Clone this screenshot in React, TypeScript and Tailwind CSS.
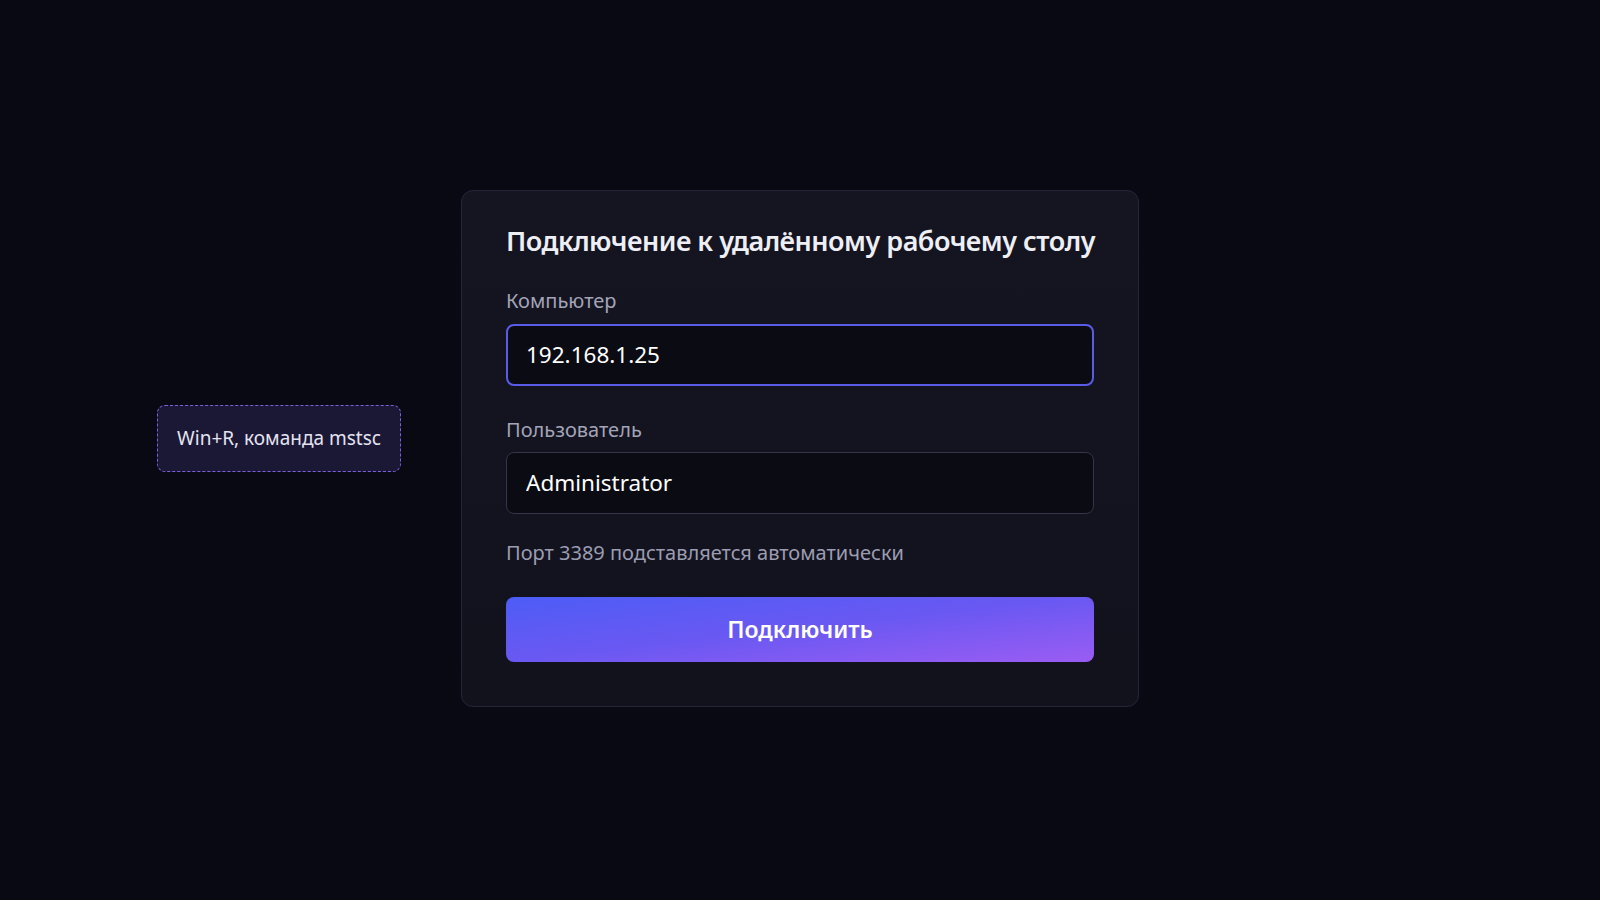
import React, { useState } from 'react';

const FONT = '"Noto Sans", "Open Sans", sans-serif';

export default function App() {
  const [host, setHost] = useState('192.168.1.25');
  const [user, setUser] = useState('Administrator');

  return (
    <div
      className="min-h-screen w-full bg-[#090914] flex items-center justify-center"
      style={{ fontFamily: FONT }}
    >
      <div className="relative mb-[4px]">
        {/* подсказка слева от карточки */}
        <div className="absolute right-[calc(100%+60px)] top-[215px] w-[244px] h-[67px] rounded-lg border-[1.5px] border-dashed border-[#7d5fdc] bg-[#1b1836] flex items-center justify-center">
          <span className="text-[19px] text-[#e4e3f0] whitespace-nowrap">Win+R, команда mstsc</span>
        </div>

        <div className="w-[678px] rounded-xl border border-[#25253a] bg-gradient-to-b from-[#151522] to-[#12121d] px-11 pt-[30px] pb-[44px] flex flex-col">
          <h1 className="text-[27px] font-semibold text-[#eeeef5] leading-[40px] tracking-[-0.5px] whitespace-nowrap">
            Подключение к удалённому рабочему столу
          </h1>

          <label className="mt-[26px] text-[20px] text-[#a3a4b8] leading-[28px]">Компьютер</label>
          <input
            value={host}
            onChange={(e) => setHost(e.target.value)}
            className="mt-[9px] h-[62px] w-full rounded-lg border-2 border-[#5a5ce8] bg-[#0b0b14] px-[18px] text-[22.5px] text-white outline-none"
          />

          <label className="mt-[30px] text-[20px] text-[#a3a4b8] leading-[28px]">Пользователь</label>
          <input
            value={user}
            onChange={(e) => setUser(e.target.value)}
            className="mt-[8px] h-[62px] w-full rounded-lg border border-[#34344a] bg-[#0b0b14] px-[19px] text-[22.5px] text-white outline-none"
          />

          <p className="mt-[25px] text-[20px] text-[#9c9db2] leading-[28px]">Порт 3389 подставляется автоматически</p>

          <button className="mt-[30px] h-[65px] w-full rounded-lg bg-gradient-to-br from-[#4c5cf6] via-[#6a58f2] to-[#9a5cf3] text-[23px] font-semibold text-white">
            Подключить
          </button>
        </div>
      </div>
    </div>
  );
}
